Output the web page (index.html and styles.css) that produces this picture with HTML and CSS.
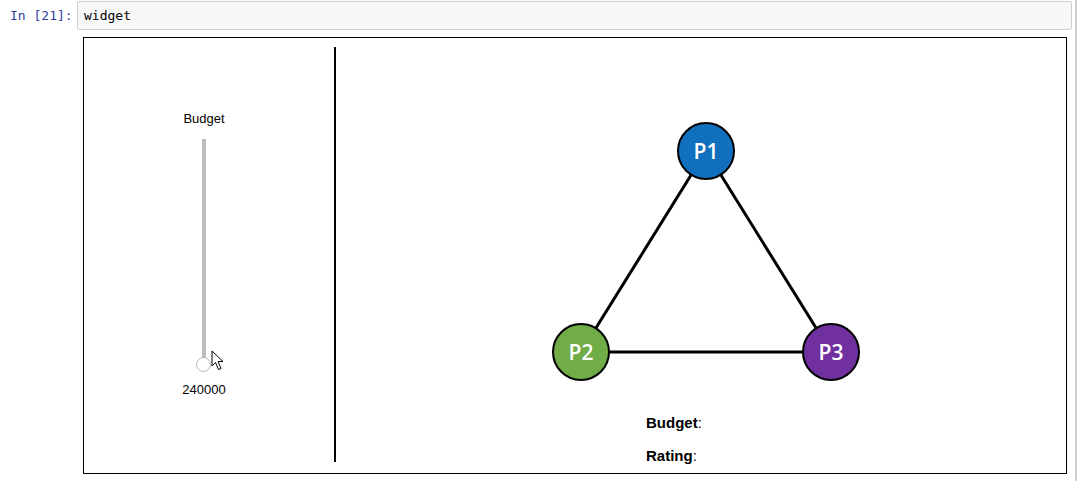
FILE: index.html
```html
<!DOCTYPE html>
<html>
<head>
<meta charset="utf-8">
<link rel="stylesheet" href="styles.css">
</head>
<body>
<div class="page">
  <div class="cell">
    <div class="prompt">In&nbsp;[21]:</div>
    <div class="input">widget</div>
  </div>
  <div class="output">
    <div class="left">
      <div class="slider">
        <div class="slider-label">Budget</div>
        <div class="track">
          <div class="handle"></div>
          <svg class="cursor" width="14" height="21" viewBox="0 0 14 21">
            <path d="M1 1 L1 16 L4.5 12.5 L7.5 19.5 L10 18.5 L7 11.5 L12 11.5 Z" fill="#fff" stroke="#000" stroke-width="1" stroke-linejoin="miter"/>
          </svg>
        </div>
        <div class="slider-value">240000</div>
      </div>
    </div>
    <div class="divider"></div>
    <div class="right">
      <svg class="graph" width="730" height="362" viewBox="0 0 730 362">
        <g stroke="#000" stroke-width="3">
          <line x1="370" y1="113" x2="245" y2="314"/>
          <line x1="370" y1="113" x2="495" y2="314"/>
          <line x1="245" y1="314" x2="495" y2="314"/>
        </g>
        <g stroke="#000" stroke-width="2">
          <circle cx="370" cy="113" r="28" fill="#1170be"/>
          <circle cx="245" cy="314" r="28" fill="#70ad47"/>
          <circle cx="495" cy="314" r="28" fill="#7030a0"/>
        </g>
        <g class="node-label" text-anchor="middle">
          <text x="370" y="121">P1</text>
          <text x="245" y="322">P2</text>
          <text x="495" y="322">P3</text>
        </g>
      </svg>
      <div class="stats">
        <div class="stat"><b>Budget</b>:</div>
        <div class="stat"><b>Rating</b>:</div>
      </div>
    </div>
  </div>
</div>
</body>
</html>
```
FILE: styles.css
```css
html, body {
  margin: 0;
  padding: 0;
  background: #fff;
}
.page {
  width: 1077px;
  height: 481px;
  border-right: 2px solid #cfcfcf;
  box-sizing: border-box;
  font-family: "Liberation Sans", Arial, sans-serif;
}
.cell {
  display: flex;
  align-items: stretch;
  padding-top: 1px;
}
.prompt {
  width: 77px;
  box-sizing: border-box;
  padding: 0 5px 0 10px;
  font-family: "DejaVu Sans Mono", monospace;
  font-size: 13px;
  line-height: 29px;
  color: #303f9f;
}
.input {
  width: 995px;
  height: 29px;
  box-sizing: border-box;
  border: 1px solid #cfcfcf;
  border-radius: 2px;
  background: #f7f7f7;
  padding-left: 6px;
  font-family: "DejaVu Sans Mono", monospace;
  font-size: 13px;
  line-height: 27px;
  color: #000;
}
.output {
  margin-left: 83px;
  margin-top: 7px;
  width: 984px;
  height: 437px;
  box-sizing: border-box;
  border: 1px solid #000;
  display: flex;
}
.left {
  width: 250px;
  padding-top: 73px;
}
.slider {
  width: 240px;
  display: flex;
  flex-direction: column;
  align-items: center;
}
.slider-label {
  font-size: 13px;
  line-height: 15px;
  color: #000;
}
.track {
  position: relative;
  width: 4px;
  height: 219px;
  margin-top: 13px;
  margin-left: -1px;
  background: #bdbdbd;
}
.handle {
  position: absolute;
  left: -6px;
  bottom: -14px;
  width: 15px;
  height: 15px;
  border: 1px solid #b5b5b5;
  border-radius: 50%;
  background: #fff;
  box-sizing: border-box;
}
.cursor {
  position: absolute;
  left: 9px;
  top: 211px;
}
.slider-value {
  margin-top: 24px;
  font-size: 13px;
  line-height: 15px;
  color: #000;
}
.divider {
  width: 2px;
  height: 415px;
  margin-top: 9px;
  background: #000;
}
.right {
  width: 730px;
  display: flex;
  flex-direction: column;
}
.graph {
  display: block;
}
.node-label {
  font-family: "Open Sans", "Noto Sans", sans-serif;
  font-weight: 600;
  font-size: 21px;
  fill: #fff;
}
.stats {
  padding-left: 310px;
  padding-top: 6px;
  font-size: 15px;
  color: #000;
}
.stat {
  height: 33px;
  line-height: 33px;
}
.stat b {
  font-weight: bold;
}
```
